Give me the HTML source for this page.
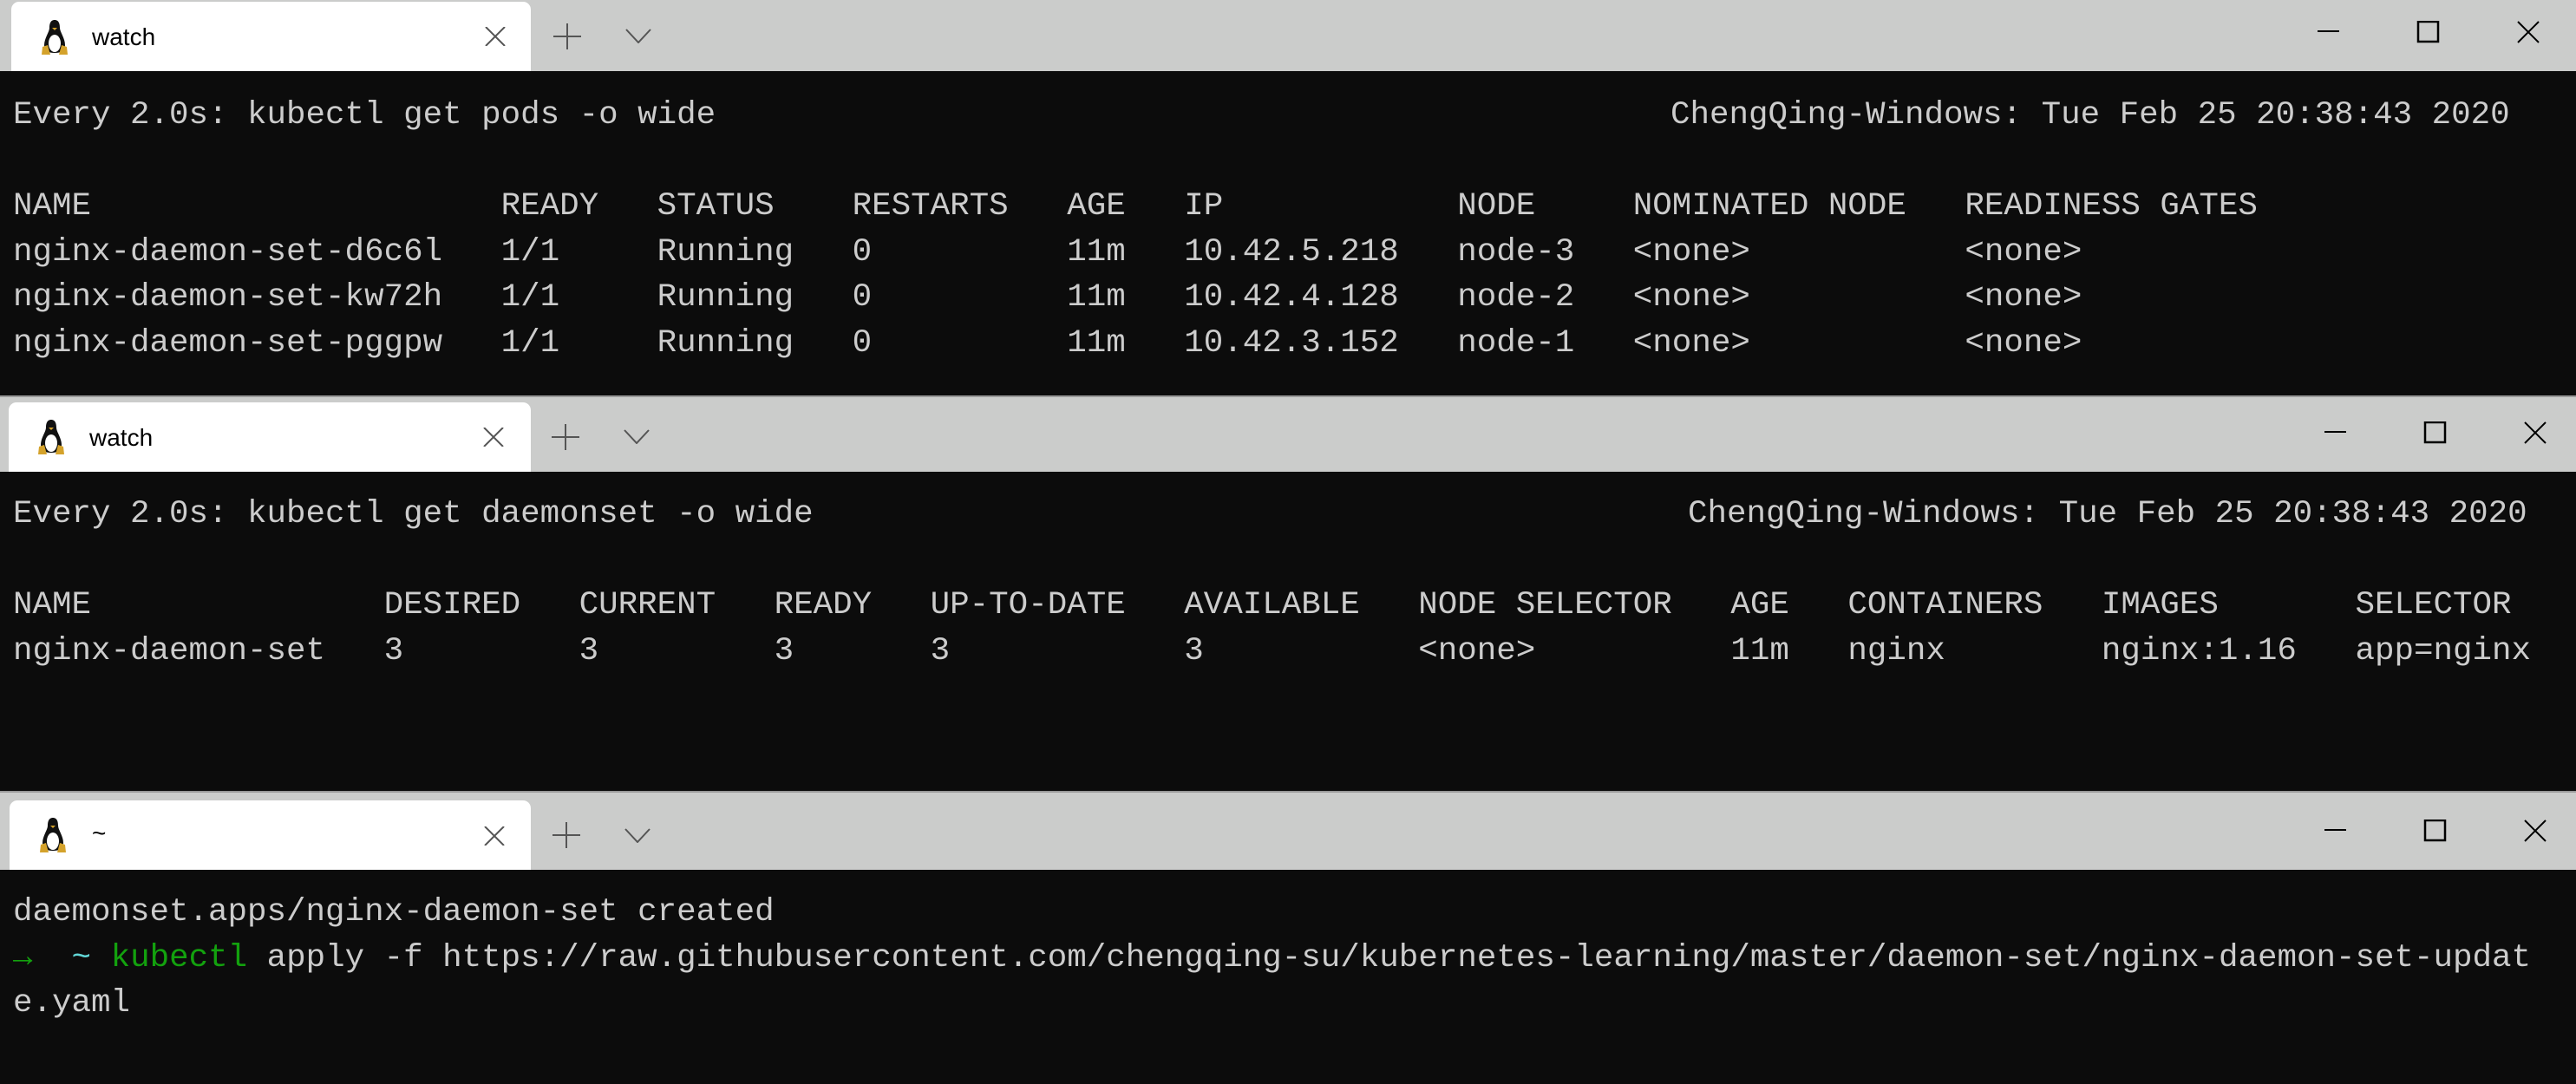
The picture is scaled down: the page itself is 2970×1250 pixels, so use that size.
<!DOCTYPE html>
<html><head><meta charset="utf-8"><style>
*{margin:0;padding:0;box-sizing:border-box}
body{width:2970px;height:1250px;background:#0c0c0c;position:relative;overflow:hidden;font-family:"Liberation Sans",sans-serif}
.bar{position:absolute;left:0;width:2970px;background:#cbcccb}
.term{position:absolute;left:0;width:2970px;background:#0c0c0c}
.tab{position:absolute;background:#fff;border-radius:9px 9px 0 0}
.tab .t{position:absolute;left:93px;top:25px;font-size:28px;color:#000}
.tab svg{position:absolute}
pre{position:absolute;left:15px;font-family:"Liberation Mono",monospace;font-size:37.5px;line-height:52.5px;color:#cccccc;white-space:pre}
.ic{position:absolute}
.g{color:#13a10e}.c{color:#61d6d6}
</style></head><body>

<!-- window 1 -->
<div class="bar" style="top:0;height:82px"></div>
<div class="tab" style="left:13px;top:2px;width:599px;height:80px">
<svg style="left:32px;top:20px" width="36" height="42" viewBox="0 0 36 42"><path d="M18 1C13 1 12 6 12 10C12 15 6 22 6 30C6 36 10 39 18 39C26 39 30 36 30 30C30 22 24 15 24 10C24 6 23 1 18 1Z" fill="#111"/><ellipse cx="18" cy="28" rx="7" ry="10" fill="#fff"/><path d="M4 32 L10 30 L13 41 L3 41Z" fill="#d4a22b"/><path d="M32 32 L26 30 L23 41 L33 41Z" fill="#d4a22b"/><path d="M15 10 L21 10 L18 13Z" fill="#d4a22b"/></svg>
<div class="t">watch</div>
<svg style="left:546px;top:29px" width="24" height="22"><path d="M1 0L23 22M23 0L1 22" stroke="#555" stroke-width="2"/></svg>
</div>
<svg class="ic" style="left:638px;top:27px" width="32" height="30"><path d="M16 0V30M0 15H32" stroke="#555" stroke-width="2"/></svg>
<svg class="ic" style="left:721px;top:33px" width="30" height="17"><path d="M1 1L15 16L29 1" fill="none" stroke="#555" stroke-width="2"/></svg>
<svg class="ic" style="left:2672px;top:24px" width="260" height="26"><path d="M0 12H25" stroke="#000" stroke-width="2"/><rect x="116" y="1" width="23" height="23" fill="none" stroke="#000" stroke-width="2.5"/><path d="M231 1L255 25M255 1L231 25" stroke="#000" stroke-width="2"/></svg>
<div class="term" style="top:82px;height:374px"></div>
<pre style="top:107px">Every 2.0s: kubectl get pods -o wide

NAME                     READY   STATUS    RESTARTS   AGE   IP            NODE     NOMINATED NODE   READINESS GATES
nginx-daemon-set-d6c6l   1/1     Running   0          11m   10.42.5.218   node-3   &lt;none&gt;           &lt;none&gt;
nginx-daemon-set-kw72h   1/1     Running   0          11m   10.42.4.128   node-2   &lt;none&gt;           &lt;none&gt;
nginx-daemon-set-pggpw   1/1     Running   0          11m   10.42.3.152   node-1   &lt;none&gt;           &lt;none&gt;</pre>
<pre style="top:107px;left:1926px">ChengQing-Windows: Tue Feb 25 20:38:43 2020</pre>

<!-- window 2 -->
<div class="bar" style="top:456px;height:88px;border-top:2px solid #9a9a9a"></div>
<div class="tab" style="left:10px;top:464px;width:602px;height:80px">
<svg style="left:31px;top:19px" width="36" height="42" viewBox="0 0 36 42"><path d="M18 1C13 1 12 6 12 10C12 15 6 22 6 30C6 36 10 39 18 39C26 39 30 36 30 30C30 22 24 15 24 10C24 6 23 1 18 1Z" fill="#111"/><ellipse cx="18" cy="28" rx="7" ry="10" fill="#fff"/><path d="M4 32 L10 30 L13 41 L3 41Z" fill="#d4a22b"/><path d="M32 32 L26 30 L23 41 L33 41Z" fill="#d4a22b"/><path d="M15 10 L21 10 L18 13Z" fill="#d4a22b"/></svg>
<div class="t">watch</div>
<svg style="left:547px;top:29px" width="24" height="22"><path d="M1 0L23 22M23 0L1 22" stroke="#555" stroke-width="2"/></svg>
</div>
<svg class="ic" style="left:636px;top:489px" width="32" height="30"><path d="M16 0V30M0 15H32" stroke="#555" stroke-width="2"/></svg>
<svg class="ic" style="left:719px;top:495px" width="30" height="17"><path d="M1 1L15 16L29 1" fill="none" stroke="#555" stroke-width="2"/></svg>
<svg class="ic" style="left:2680px;top:486px" width="260" height="26"><path d="M0 12H25" stroke="#000" stroke-width="2"/><rect x="116" y="1" width="23" height="23" fill="none" stroke="#000" stroke-width="2.5"/><path d="M231 1L255 25M255 1L231 25" stroke="#000" stroke-width="2"/></svg>
<div class="term" style="top:544px;height:368px"></div>
<pre style="top:567px">Every 2.0s: kubectl get daemonset -o wide

NAME               DESIRED   CURRENT   READY   UP-TO-DATE   AVAILABLE   NODE SELECTOR   AGE   CONTAINERS   IMAGES       SELECTOR
nginx-daemon-set   3         3         3       3            3           &lt;none&gt;          11m   nginx        nginx:1.16   app=nginx</pre>
<pre style="top:567px;left:1946px">ChengQing-Windows: Tue Feb 25 20:38:43 2020</pre>

<!-- window 3 -->
<div class="bar" style="top:912px;height:91px;border-top:2px solid #9a9a9a"></div>
<div class="tab" style="left:11px;top:923px;width:601px;height:80px">
<svg style="left:32px;top:19px" width="36" height="42" viewBox="0 0 36 42"><path d="M18 1C13 1 12 6 12 10C12 15 6 22 6 30C6 36 10 39 18 39C26 39 30 36 30 30C30 22 24 15 24 10C24 6 23 1 18 1Z" fill="#111"/><ellipse cx="18" cy="28" rx="7" ry="10" fill="#fff"/><path d="M4 32 L10 30 L13 41 L3 41Z" fill="#d4a22b"/><path d="M32 32 L26 30 L23 41 L33 41Z" fill="#d4a22b"/><path d="M15 10 L21 10 L18 13Z" fill="#d4a22b"/></svg>
<div class="t" style="left:95px;top:22px">~</div>
<svg style="left:547px;top:30px" width="24" height="22"><path d="M1 0L23 22M23 0L1 22" stroke="#555" stroke-width="2"/></svg>
</div>
<svg class="ic" style="left:637px;top:948px" width="32" height="30"><path d="M16 0V30M0 15H32" stroke="#555" stroke-width="2"/></svg>
<svg class="ic" style="left:720px;top:955px" width="30" height="17"><path d="M1 1L15 16L29 1" fill="none" stroke="#555" stroke-width="2"/></svg>
<svg class="ic" style="left:2680px;top:945px" width="260" height="26"><path d="M0 12H25" stroke="#000" stroke-width="2"/><rect x="116" y="1" width="23" height="23" fill="none" stroke="#000" stroke-width="2.5"/><path d="M231 1L255 25M255 1L231 25" stroke="#000" stroke-width="2"/></svg>
<div class="term" style="top:1003px;height:247px"></div>
<pre style="top:1026px">daemonset.apps/nginx-daemon-set created
<span class="g">→</span>  <span class="c">~</span> <span class="g">kubectl</span> apply -f https://raw.githubusercontent.com/chengqing-su/kubernetes-learning/master/daemon-set/nginx-daemon-set-updat
e.yaml</pre>
</body></html>
